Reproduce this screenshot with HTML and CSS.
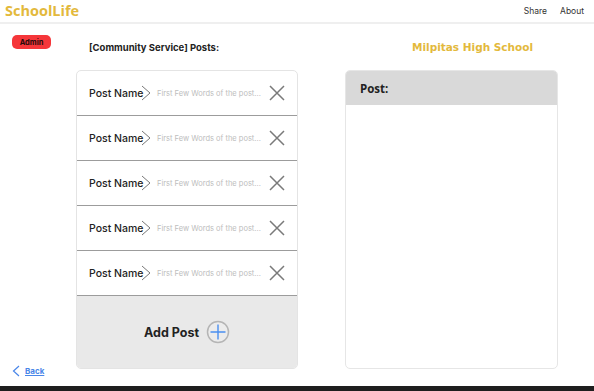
FILE: index.html
```html
<!DOCTYPE html>
<html lang="en">
  <head>
    <meta charset="UTF-8" />
    <meta name="viewport" content="width=device-width, initial-scale=1.0" />
    <title>SchoolLife - Posts</title>
    <link rel="stylesheet" href="styles.css">
  </head>
  <body>
    <!-- Top bar -->
    <header class="topbar">
      <div class="brand">SchoolLife</div>
      <nav class="nav">
        <a href="#">Share</a>
        <a href="#">About</a>
      </nav>
    </header>

    <main class="main">
      <!-- Sidebar -->
      <aside class="sidebar">
        <span class="badge">Admin</span>
        <a href="#" class="back">
          <svg width="8" height="12" viewBox="0 0 8 12"><path d="M7 1 L1.5 6 L7 11" fill="none" stroke="#4a86e8" stroke-width="1.2"/></svg>
          <span>Back</span>
        </a>
      </aside>

      <!-- Post list -->
      <section class="column">
        <div class="column-title">[Community Service] Posts:</div>
        <div class="list-card">
          <div class="post-row">
            <span class="post-name">Post Name</span>
            <svg class="chevron" width="10" height="16" viewBox="0 0 10 16"><path d="M1 1 L9 8 L1 15" fill="none" stroke="#777" stroke-width="1"/></svg>
            <span class="post-preview">First Few Words of the post...</span>
            <svg class="remove" width="16" height="16" viewBox="0 0 16 16"><path d="M1 1 L15 15 M15 1 L1 15" stroke="#7a7a7a" stroke-width="1.5"/></svg>
          </div>
          <div class="post-row">
            <span class="post-name">Post Name</span>
            <svg class="chevron" width="10" height="16" viewBox="0 0 10 16"><path d="M1 1 L9 8 L1 15" fill="none" stroke="#777" stroke-width="1"/></svg>
            <span class="post-preview">First Few Words of the post...</span>
            <svg class="remove" width="16" height="16" viewBox="0 0 16 16"><path d="M1 1 L15 15 M15 1 L1 15" stroke="#7a7a7a" stroke-width="1.5"/></svg>
          </div>
          <div class="post-row">
            <span class="post-name">Post Name</span>
            <svg class="chevron" width="10" height="16" viewBox="0 0 10 16"><path d="M1 1 L9 8 L1 15" fill="none" stroke="#777" stroke-width="1"/></svg>
            <span class="post-preview">First Few Words of the post...</span>
            <svg class="remove" width="16" height="16" viewBox="0 0 16 16"><path d="M1 1 L15 15 M15 1 L1 15" stroke="#7a7a7a" stroke-width="1.5"/></svg>
          </div>
          <div class="post-row">
            <span class="post-name">Post Name</span>
            <svg class="chevron" width="10" height="16" viewBox="0 0 10 16"><path d="M1 1 L9 8 L1 15" fill="none" stroke="#777" stroke-width="1"/></svg>
            <span class="post-preview">First Few Words of the post...</span>
            <svg class="remove" width="16" height="16" viewBox="0 0 16 16"><path d="M1 1 L15 15 M15 1 L1 15" stroke="#7a7a7a" stroke-width="1.5"/></svg>
          </div>
          <div class="post-row">
            <span class="post-name">Post Name</span>
            <svg class="chevron" width="10" height="16" viewBox="0 0 10 16"><path d="M1 1 L9 8 L1 15" fill="none" stroke="#777" stroke-width="1"/></svg>
            <span class="post-preview">First Few Words of the post...</span>
            <svg class="remove" width="16" height="16" viewBox="0 0 16 16"><path d="M1 1 L15 15 M15 1 L1 15" stroke="#7a7a7a" stroke-width="1.5"/></svg>
          </div>
          <div class="add-post">
            <span>Add Post</span>
            <svg width="24" height="24" viewBox="0 0 24 24">
              <circle cx="12" cy="12" r="10.5" fill="#ececec" stroke="#b5b5b5" stroke-width="1.5"/>
              <path d="M12 4.5 V19.5 M4.5 12 H19.5" stroke="#4a8ff0" stroke-width="1.4"/>
            </svg>
          </div>
        </div>
      </section>

      <!-- Post detail -->
      <section class="column column-right">
        <div class="column-title school">Milpitas High School</div>
        <div class="post-card">
          <div class="post-card-head">Post:</div>
          <div class="post-card-body"></div>
        </div>
      </section>
    </main>

    <div class="bottombar"></div>
  </body>
</html>
```

FILE: styles.css
```css
body {
  margin: 0;
  height: 391px;
  display: flex;
  flex-direction: column;
  background-color: #fff;
  font-family: 'Inter', 'Liberation Sans', sans-serif;
  color: #222;
  overflow: hidden;
}
.topbar {
  height: 22px;
  display: flex;
  align-items: center;
  justify-content: space-between;
  padding: 0 10px 0 5px;
  border-bottom: 2px solid #efefef;
}
.brand {
  font-family: 'Open Sans', sans-serif;
  font-weight: 700;
  font-size: 14.5px;
  color: #e3b93c;
  margin-top: -2px;
}
.nav {
  display: flex;
  gap: 13px;
}
.nav a {
  font-size: 8.5px;
  color: #333;
  text-decoration: none;
}
.main {
  flex: 1;
  display: flex;
}
.sidebar {
  width: 76px;
  display: flex;
  flex-direction: column;
  justify-content: space-between;
  align-items: flex-start;
  padding: 11px 0 9px 12px;
  box-sizing: border-box;
}
.badge {
  background-color: #f5363a;
  color: #2a0a0a;
  font-size: 7.5px;
  font-weight: 700;
  line-height: 9px;
  padding: 3px 0 2px;
  border-radius: 5px;
  width: 39px;
  text-align: center;
}
.back {
  display: flex;
  align-items: center;
  gap: 5px;
  color: #4a86e8;
  font-size: 8px;
  font-weight: 700;
  text-decoration: none;
}
.back span {
  text-decoration: underline;
}
.column {
  width: 222px;
  display: flex;
  flex-direction: column;
}
.column-right {
  width: 213px;
  margin-left: 47px;
}
.column-title {
  height: 46px;
  display: flex;
  align-items: center;
  padding-left: 13px;
  font-size: 9.5px;
  font-weight: 700;
  color: #222;
}
.school {
  padding-left: 67px;
  color: #e3b93c;
  font-family: 'DejaVu Sans', sans-serif;
  font-size: 10.5px;
}
.list-card {
  height: 299px;
  display: flex;
  flex-direction: column;
  border: 1px solid #e4e4e4;
  border-radius: 5px;
  box-sizing: border-box;
  overflow: hidden;
}
.post-row {
  height: 44px;
  flex-shrink: 0;
  display: flex;
  align-items: center;
  padding-left: 12px;
  border-bottom: 1px solid #9c9c9c;
}
.post-name {
  font-size: 10.5px;
  font-weight: 500;
  color: #222;
  width: 52px;
  white-space: nowrap;
}
.post-preview {
  font-size: 7.5px;
  color: #bdbdbd;
  margin-left: 6px;
  width: 112px;
  white-space: nowrap;
}
.add-post {
  flex: 1;
  background-color: #e9e9e9;
  display: flex;
  align-items: center;
  justify-content: center;
  gap: 7px;
  font-size: 12.5px;
  font-weight: 700;
  color: #222;
}
.post-card {
  height: 299px;
  display: flex;
  flex-direction: column;
  border: 1px solid #e6e6e6;
  border-radius: 5px;
  box-sizing: border-box;
  overflow: hidden;
}
.post-card-head {
  height: 34px;
  background-color: #d9d9d9;
  display: flex;
  align-items: center;
  padding-left: 14px;
  font-family: 'Open Sans', sans-serif;
  font-size: 11.5px;
  font-weight: 700;
  color: #222;
}
.post-card-body {
  flex: 1;
}
.bottombar {
  height: 5px;
  background-color: #1e1e1e;
}
```
